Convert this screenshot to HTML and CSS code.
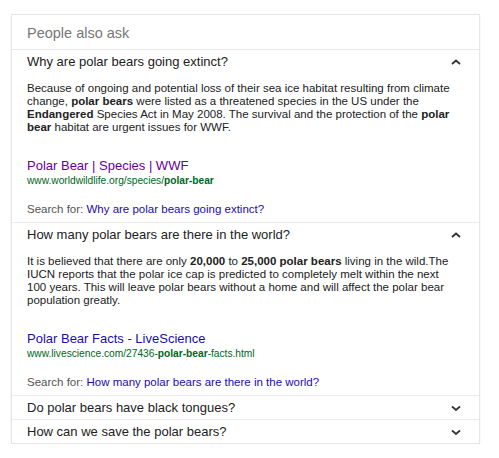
FILE: index.html
```html
<!DOCTYPE html>
<html>
<head>
<meta charset="utf-8">
<link rel="stylesheet" href="styles.css">
</head>
<body>
<div class="card">
  <div class="header">People also ask</div>

  <div class="item">
    <div class="q"><span>Why are polar bears going extinct?</span>
      <svg class="chev" width="10" height="6" viewBox="0 0 10 6"><polyline points="1,5 5,1.5 9,5" fill="none" stroke="#333" stroke-width="1.8"/></svg>
    </div>
    <div class="ans">
      <p class="txt">Because of ongoing and potential loss of their sea ice habitat resulting from climate change, <b>polar bears</b> were listed as a threatened species in the US under the <b>Endangered</b> Species Act in May 2008. The survival and the protection of the <b>polar bear</b> habitat are urgent issues for WWF.</p>
      <a class="title visited" href="#">Polar Bear | Species | WWF</a>
      <div class="url">www.worldwildlife.org/species/<b>polar-bear</b></div>
      <div class="search">Search for: <a href="#">Why are polar bears going extinct?</a></div>
    </div>
  </div>

  <div class="item">
    <div class="q"><span>How many polar bears are there in the world?</span>
      <svg class="chev" width="10" height="6" viewBox="0 0 10 6"><polyline points="1,5 5,1.5 9,5" fill="none" stroke="#333" stroke-width="1.8"/></svg>
    </div>
    <div class="ans">
      <p class="txt">It is believed that there are only <b>20,000</b> to <b>25,000 polar bears</b> living in the wild.The IUCN reports that the polar ice cap is predicted to completely melt within the next 100 years. This will leave polar bears without a home and will affect the polar bear population greatly.</p>
      <a class="title" href="#">Polar Bear Facts - LiveScience</a>
      <div class="url">www.livescience.com/27436-<b>polar-bear</b>-facts.html</div>
      <div class="search">Search for: <a href="#">How many polar bears are there in the world?</a></div>
    </div>
  </div>

  <div class="item">
    <div class="q"><span>Do polar bears have black tongues?</span>
      <svg class="chev" width="10" height="6" viewBox="0 0 10 6"><polyline points="1,1.5 5,5 9,1.5" fill="none" stroke="#333" stroke-width="1.8"/></svg>
    </div>
  </div>

  <div class="item last">
    <div class="q"><span>How can we save the polar bears?</span>
      <svg class="chev" width="10" height="6" viewBox="0 0 10 6"><polyline points="1,1.5 5,5 9,1.5" fill="none" stroke="#333" stroke-width="1.8"/></svg>
    </div>
  </div>
</div>
</body>
</html>
```

FILE: styles.css
```css
html, body {
  margin: 0;
  padding: 0;
  background: #fff;
}
body {
  font-family: "Liberation Sans", Arial, sans-serif;
  color: #222;
  padding: 14px 0 0 11px;
}
.card {
  width: 467px;
  border: 1px solid #e6e6e6;
  box-shadow: 0 1px 2px rgba(0,0,0,0.08);
  background: #fff;
}
.header {
  height: 34px;
  line-height: 36px;
  padding-left: 15px;
  font-size: 14.5px;
  color: #777;
  border-bottom: 1px solid #e8e8e8;
}
.item {
  border-bottom: 1px solid #ebebeb;
}
.item.last {
  border-bottom: none;
}
.q {
  height: 23px;
  display: flex;
  align-items: center;
  justify-content: space-between;
  padding: 0 18px 0 15px;
  font-size: 13px;
  color: #222;
}
.chev {
  display: block;
}
.ans {
  padding: 9px 0 5px 15px;
}
.txt {
  width: 428px;
  margin: 0;
  font-size: 11.5px;
  line-height: 13px;
  color: #222;
}
.title {
  display: block;
  margin-top: 24px;
  font-size: 13px;
  line-height: 16px;
  color: #1a0dab;
  text-decoration: none;
}
.title.visited {
  color: #660099;
}
.url {
  font-size: 10.2px;
  line-height: 13px;
  color: #006621;
}
.url b {
  font-weight: bold;
}
.search {
  margin-top: 14px;
  font-size: 11.5px;
  line-height: 16px;
  color: #545454;
}
.search a {
  color: #1a0dab;
  text-decoration: none;
}
```
